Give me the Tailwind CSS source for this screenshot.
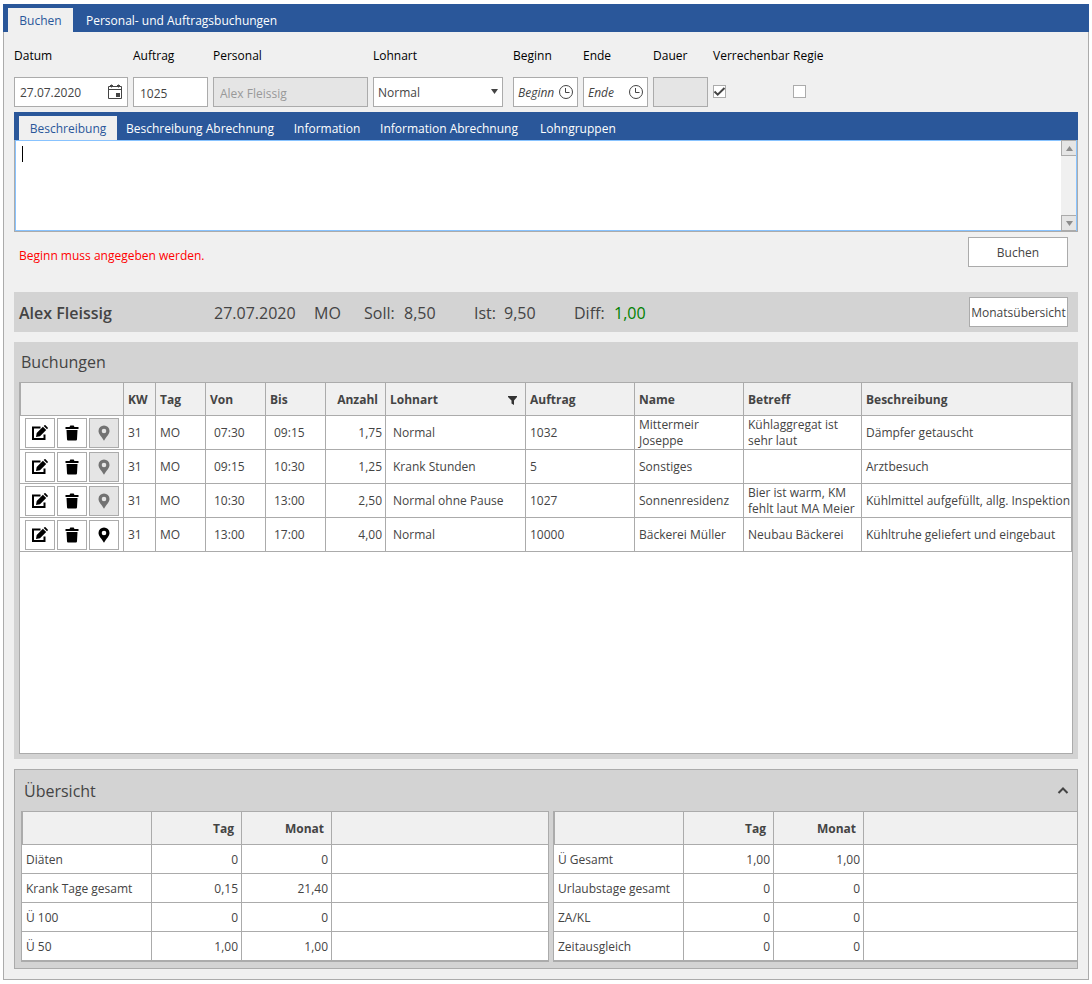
<!DOCTYPE html>
<html lang="de">
<head>
    <meta charset="UTF-8" />
    <meta name="viewport" content="width=device-width, initial-scale=1.0" />
    <title>Buchen</title>
    <!-- Tailwind CSS CDN -->
    <script src="https://cdn.jsdelivr.net/npm/@tailwindcss/browser@4"></script>
</head>
<body class="min-h-screen flex flex-col bg-white px-[3px] py-1 font-['Open_Sans',sans-serif] text-xs text-[#444444]">

    <!-- Icons used more than once -->
    <svg class="hidden">
        <symbol id="icon-edit" viewBox="0 0 16 16">
            <path d="M8.500 2.500H1v11.500h11.500V9.500" fill="none" stroke="currentColor" stroke-width="2" />
            <path d="M4 12l.7-4 6.200-6.200 3.300 3.300L8 11.300zM11.700 1l.8-.7c.3-.3.7-.3 1 0l2.200 2.200c.3.3.3.7 0 1l-.7.8z" fill="currentColor" />
        </symbol>
        <symbol id="icon-trash" viewBox="0 0 16 16">
            <path d="M1.500 2h4l.8-1.500h3.400L10.500 2h4v2h-13zM2.500 5h11l-.5 9.200c0 .8-.6 1.300-1.300 1.300h-7.400c-.7 0-1.300-.5-1.300-1.300z" fill="currentColor" />
        </symbol>
        <symbol id="icon-pin" viewBox="0 0 16 16">
            <path fill-rule="evenodd" d="M8 0.500a5.500 5.500 0 0 0-5.500 5.500c0 3 3 5.500 5.500 9.700c2.500-4.200 5.500-6.700 5.500-9.700a5.500 5.500 0 0 0-5.500-5.500zM8 3.700a2.300 2.300 0 1 1 0 4.600a2.300 2.300 0 0 1 0-4.600z" fill="currentColor" />
        </symbol>
        <symbol id="icon-clock" viewBox="0 0 14 14">
            <circle cx="7" cy="7" r="6.500" fill="none" stroke="currentColor" />
            <path d="M6.500 3v4.500H10.500" fill="none" stroke="currentColor" />
        </symbol>
    </svg>

    <!-- Main tabs -->
    <nav class="flex h-7 items-end bg-[#2a579a] pl-[5px] text-white">
        <button class="h-6 w-[65px] bg-[#f0f0f0] pt-0.5 text-[#2a579a]">Buchen</button>
        <button class="h-6 px-[13px] pt-0.5">Personal- und Auftragsbuchungen</button>
    </nav>

    <main class="flex flex-1 flex-col border border-t-0 border-[#ababab] bg-[#f0f0f0] px-2.5 pt-4 pb-2.5">

        <!-- Booking form -->
        <form class="flex gap-[5px]">
            <div class="flex w-[114px] flex-col gap-[13px]">
                <label for="datum" class="leading-4 text-black">Datum</label>
                <div class="flex h-[30px] items-center border border-[#ababab] bg-white pr-1 pl-[5px]">
                    <input id="datum" type="text" value="27.07.2020" class="w-full min-w-0 flex-1 pt-0.5 outline-none" />
                    <svg class="h-4 w-4 shrink-0" viewBox="0 0 16 16" fill="none" stroke="#444444">
                        <path d="M1.500 2.500h13v12h-13zM1.500 5.500h13M4.500 0.500v3M11.500 0.500v3M3 1.500h3M10 1.500h3" />
                        <path d="M9 9h4v4H9z" fill="#444444" stroke="none" />
                    </svg>
                </div>
            </div>
            <div class="flex w-[75px] flex-col gap-[13px]">
                <label for="auftrag" class="leading-4 text-black">Auftrag</label>
                <input id="auftrag" type="text" value="1025" class="h-[30px] border border-[#ababab] bg-white px-1.5 pt-0.5 outline-none" />
            </div>
            <div class="flex w-[155px] flex-col gap-[13px]">
                <label for="personal" class="leading-4 text-black">Personal</label>
                <input id="personal" type="text" value="Alex Fleissig" disabled class="h-[30px] border border-[#ababab] bg-[#e5e5e5] px-1.5 pt-0.5 text-[#999999]" />
            </div>
            <div class="flex w-[130px] flex-col gap-[13px]">
                <label for="lohnart" class="leading-4 text-black">Lohnart</label>
                <div class="relative">
                    <select id="lohnart" class="h-[30px] w-full appearance-none border border-[#ababab] bg-white px-1 pt-0.5 outline-none">
                        <option>Normal</option>
                        <option>Krank Stunden</option>
                        <option>Normal ohne Pause</option>
                    </select>
                    <svg class="pointer-events-none absolute top-3 right-[5px] h-[5px] w-[7px]" viewBox="0 0 7 5"><path d="M0 0h7L3.500 5z" fill="#444444" /></svg>
                </div>
            </div>
            <div class="ml-[5px] flex w-[65px] flex-col gap-[13px]">
                <label for="beginn" class="leading-4 text-black">Beginn</label>
                <div class="flex h-[30px] items-center border border-[#ababab] bg-white px-1">
                    <input id="beginn" type="text" placeholder="Beginn" class="w-full min-w-0 flex-1 pt-0.5 outline-none placeholder:text-[#444444] placeholder:italic" />
                    <svg class="h-3.5 w-3.5 shrink-0"><use href="#icon-clock" /></svg>
                </div>
            </div>
            <div class="flex w-[65px] flex-col gap-[13px]">
                <label for="ende" class="leading-4 text-black">Ende</label>
                <div class="flex h-[30px] items-center border border-[#ababab] bg-white px-1">
                    <input id="ende" type="text" placeholder="Ende" class="w-full min-w-0 flex-1 pt-0.5 outline-none placeholder:text-[#444444] placeholder:italic" />
                    <svg class="h-3.5 w-3.5 shrink-0"><use href="#icon-clock" /></svg>
                </div>
            </div>
            <div class="flex w-[55px] flex-col gap-[13px]">
                <label for="dauer" class="leading-4 text-black">Dauer</label>
                <input id="dauer" type="text" disabled class="h-[30px] border border-[#ababab] bg-[#e5e5e5] px-1.5" />
            </div>
            <div class="flex w-[75px] flex-col gap-[21px]">
                <label for="verrechenbar" class="leading-4 text-black">Verrechenbar</label>
                <div class="relative h-[13px] w-[13px]">
                    <input id="verrechenbar" type="checkbox" checked class="peer block h-[13px] w-[13px] appearance-none border border-[#ababab] bg-white" />
                    <svg class="pointer-events-none absolute inset-0 hidden h-[13px] w-[13px] peer-checked:block" viewBox="0 0 13 13"><path d="M1.500 6.500l3.200 3.200L11.500 3" fill="none" stroke="#444444" stroke-width="2" /></svg>
                </div>
            </div>
            <div class="flex flex-col gap-[21px]">
                <label for="regie" class="leading-4 text-black">Regie</label>
                <input id="regie" type="checkbox" class="block h-[13px] w-[13px] appearance-none border border-[#ababab] bg-white" />
            </div>
        </form>

        <!-- Description tabs -->
        <nav class="mt-[5px] flex h-7 items-end bg-[#2a579a] pl-[5px] text-white">
            <button class="h-6 w-[98px] bg-[#f0f0f0] pt-0.5 text-[#2a579a]">Beschreibung</button>
            <button class="h-6 w-[166px] pt-0.5">Beschreibung Abrechnung</button>
            <button class="h-6 w-[88px] pt-0.5">Information</button>
            <button class="h-6 w-[156px] pt-0.5">Information Abrechnung</button>
            <button class="h-6 px-[13px] pt-0.5">Lohngruppen</button>
        </nav>
        <div class="border border-t-0 border-[#ababab]">
            <div class="relative flex h-[91px] border border-[#88c3ff] bg-white">
                <textarea aria-label="Beschreibung" class="flex-1 resize-none px-1.5 py-1 outline-none"></textarea>
                <div class="absolute top-[5px] left-1.5 h-4 w-px bg-black"></div>
                <div class="-my-px flex w-[15px] flex-col justify-between bg-[#f0f0f0]">
                    <button aria-label="Nach oben" class="flex h-4 items-center justify-center border border-r-0 border-[#ababab] bg-[#e5e5e5]">
                        <svg class="h-[5px] w-[7px]" viewBox="0 0 7 5"><path d="M0 5h7L3.500 0z" fill="#8c8c8c" /></svg>
                    </button>
                    <button aria-label="Nach unten" class="flex h-4 items-center justify-center border border-r-0 border-[#ababab] bg-[#e5e5e5]">
                        <svg class="h-[5px] w-[7px]" viewBox="0 0 7 5"><path d="M0 0h7L3.500 5z" fill="#8c8c8c" /></svg>
                    </button>
                </div>
            </div>
        </div>

        <div class="mt-[5px] flex items-center justify-between pr-2.5 pl-[5px]">
            <p class="pt-2 text-[#ff0000]">Beginn muss angegeben werden.</p>
            <button class="h-[30px] w-[100px] border border-[#ababab] bg-white pt-0.5">Buchen</button>
        </div>

        <!-- Day summary -->
        <section class="mt-[25px] flex h-10 items-center bg-[#d3d3d3] pr-2.5 pl-[5px] text-base">
            <h2 class="w-[195px] pt-0.5 font-semibold">Alex Fleissig</h2>
            <span class="w-[100px] pt-0.5">27.07.2020</span>
            <span class="w-[50px] pt-0.5">MO</span>
            <span class="w-10 pt-0.5">Soll:</span>
            <span class="w-[70px] pt-0.5">8,50</span>
            <span class="w-[30px] pt-0.5">Ist:</span>
            <span class="w-[70px] pt-0.5">9,50</span>
            <span class="w-10 pt-0.5">Diff:</span>
            <span class="pt-0.5 text-[#008000]">1,00</span>
            <button class="ml-auto h-[30px] w-[99px] border border-[#ababab] bg-white pt-0.5 text-xs">Monatsübersicht</button>
        </section>

        <!-- Bookings -->
        <section class="mt-2.5 flex flex-1 flex-col bg-[#d3d3d3] px-[5px] pb-[5px]">
            <h2 class="flex h-10 items-center pl-0.5 text-base">Buchungen</h2>
            <div class="flex-1 border border-[#ababab] bg-white">
                <table class="w-full table-fixed border-separate border-spacing-0 text-left leading-4 [&_td]:h-[34px] [&_td]:border-r [&_td]:border-b [&_td]:border-[#ababab] [&_td]:p-0 [&_td]:pt-px [&_td]:pl-1 [&_th]:h-[33px] [&_th]:border-r [&_th]:border-b [&_th]:border-[#ababab] [&_th]:bg-[#f0f0f0] [&_th]:p-0 [&_th]:pt-0.5 [&_th]:pl-1">
                    <colgroup>
                        <col class="w-[104px]" />
                        <col class="w-8" />
                        <col class="w-[50px]" />
                        <col class="w-[60px]" />
                        <col class="w-[60px]" />
                        <col class="w-[60px]" />
                        <col class="w-[140px]" />
                        <col class="w-[109px]" />
                        <col class="w-[109px]" />
                        <col class="w-[118px]" />
                        <col />
                    </colgroup>
                    <thead>
                        <tr>
                            <th class="border-l"></th>
                            <th>KW</th>
                            <th>Tag</th>
                            <th>Von</th>
                            <th>Bis</th>
                            <th><div class="pr-[7px] text-right">Anzahl</div></th>
                            <th>
                                <div class="flex items-center justify-between pr-2">
                                    Lohnart
                                    <button aria-label="Lohnart filtern"><svg class="h-[9px] w-[9px]" viewBox="0 0 9 9"><path d="M0 0h9v1L6 4.500V9L3.500 7.500v-3L0 1z" fill="#333333" /></svg></button>
                                </div>
                            </th>
                            <th>Auftrag</th>
                            <th>Name</th>
                            <th>Betreff</th>
                            <th>Beschreibung</th>
                        </tr>
                    </thead>
                    <tbody>
                        <tr>
                            <td>
                                <div class="flex gap-0.5 pl-px text-black">
                                    <button aria-label="Bearbeiten" class="flex h-[30px] w-[30px] items-center justify-center border border-[#ababab] bg-white"><svg class="h-4 w-4"><use href="#icon-edit" /></svg></button>
                                    <button aria-label="Löschen" class="flex h-[30px] w-[30px] items-center justify-center border border-[#ababab] bg-white"><svg class="h-4 w-4"><use href="#icon-trash" /></svg></button>
                                    <button aria-label="Standort" disabled class="flex h-[30px] w-[30px] items-center justify-center border border-[#ababab] bg-[#e5e5e5] text-[#727272]"><svg class="h-4 w-4"><use href="#icon-pin" /></svg></button>
                                </div>
                            </td>
                            <td>31</td>
                            <td>MO</td>
                            <td><div class="pl-1">07:30</div></td>
                            <td><div class="pl-1">09:15</div></td>
                            <td><div class="pr-[3px] text-right">1,75</div></td>
                            <td><div class="pl-[3px]">Normal</div></td>
                            <td>1032</td>
                            <td>Mittermeir<br />Joseppe</td>
                            <td>Kühlaggregat ist<br />sehr laut</td>
                            <td>Dämpfer getauscht</td>
                        </tr>
                        <tr>
                            <td>
                                <div class="flex gap-0.5 pl-px text-black">
                                    <button aria-label="Bearbeiten" class="flex h-[30px] w-[30px] items-center justify-center border border-[#ababab] bg-white"><svg class="h-4 w-4"><use href="#icon-edit" /></svg></button>
                                    <button aria-label="Löschen" class="flex h-[30px] w-[30px] items-center justify-center border border-[#ababab] bg-white"><svg class="h-4 w-4"><use href="#icon-trash" /></svg></button>
                                    <button aria-label="Standort" disabled class="flex h-[30px] w-[30px] items-center justify-center border border-[#ababab] bg-[#e5e5e5] text-[#727272]"><svg class="h-4 w-4"><use href="#icon-pin" /></svg></button>
                                </div>
                            </td>
                            <td>31</td>
                            <td>MO</td>
                            <td><div class="pl-1">09:15</div></td>
                            <td><div class="pl-1">10:30</div></td>
                            <td><div class="pr-[3px] text-right">1,25</div></td>
                            <td><div class="pl-[3px]">Krank Stunden</div></td>
                            <td>5</td>
                            <td>Sonstiges</td>
                            <td></td>
                            <td>Arztbesuch</td>
                        </tr>
                        <tr>
                            <td>
                                <div class="flex gap-0.5 pl-px text-black">
                                    <button aria-label="Bearbeiten" class="flex h-[30px] w-[30px] items-center justify-center border border-[#ababab] bg-white"><svg class="h-4 w-4"><use href="#icon-edit" /></svg></button>
                                    <button aria-label="Löschen" class="flex h-[30px] w-[30px] items-center justify-center border border-[#ababab] bg-white"><svg class="h-4 w-4"><use href="#icon-trash" /></svg></button>
                                    <button aria-label="Standort" disabled class="flex h-[30px] w-[30px] items-center justify-center border border-[#ababab] bg-[#e5e5e5] text-[#727272]"><svg class="h-4 w-4"><use href="#icon-pin" /></svg></button>
                                </div>
                            </td>
                            <td>31</td>
                            <td>MO</td>
                            <td><div class="pl-1">10:30</div></td>
                            <td><div class="pl-1">13:00</div></td>
                            <td><div class="pr-[3px] text-right">2,50</div></td>
                            <td><div class="pl-[3px]">Normal ohne Pause</div></td>
                            <td>1027</td>
                            <td>Sonnenresidenz</td>
                            <td class="whitespace-nowrap">Bier ist warm, KM<br />fehlt laut MA Meier</td>
                            <td class="whitespace-nowrap">Kühlmittel aufgefüllt, allg. Inspektion</td>
                        </tr>
                        <tr>
                            <td>
                                <div class="flex gap-0.5 pl-px text-black">
                                    <button aria-label="Bearbeiten" class="flex h-[30px] w-[30px] items-center justify-center border border-[#ababab] bg-white"><svg class="h-4 w-4"><use href="#icon-edit" /></svg></button>
                                    <button aria-label="Löschen" class="flex h-[30px] w-[30px] items-center justify-center border border-[#ababab] bg-white"><svg class="h-4 w-4"><use href="#icon-trash" /></svg></button>
                                    <button aria-label="Standort" class="flex h-[30px] w-[30px] items-center justify-center border border-[#ababab] bg-white"><svg class="h-4 w-4"><use href="#icon-pin" /></svg></button>
                                </div>
                            </td>
                            <td>31</td>
                            <td>MO</td>
                            <td><div class="pl-1">13:00</div></td>
                            <td><div class="pl-1">17:00</div></td>
                            <td><div class="pr-[3px] text-right">4,00</div></td>
                            <td><div class="pl-[3px]">Normal</div></td>
                            <td>10000</td>
                            <td>Bäckerei Müller</td>
                            <td>Neubau Bäckerei</td>
                            <td class="whitespace-nowrap">Kühltruhe geliefert und eingebaut</td>
                        </tr>
                    </tbody>
                </table>
            </div>
        </section>

        <!-- Overview -->
        <section class="mt-2.5 border border-[#ababab] bg-[#d3d3d3] pb-1.5 pl-1.5">
            <div class="flex h-[41px] items-center justify-between pr-2 pl-[3px]">
                <h2 class="text-base">Übersicht</h2>
                <button aria-label="Übersicht einklappen"><svg class="h-[11px] w-3" viewBox="0 0 12 11"><path d="M1.500 8l4.500-4.500L10.500 8" fill="none" stroke="#444444" stroke-width="2" /></svg></button>
            </div>
            <div class="grid grid-cols-[528fr_524fr] gap-1">
                <div class="border border-[#ababab] bg-white">
                    <table class="w-full table-fixed border-separate border-spacing-0 leading-4 [&_td]:h-[29px] [&_td]:border-b [&_td]:border-[#ababab] [&_td]:pt-0.5 [&_td]:pr-[3px] [&_td]:pb-0 [&_td]:pl-1 [&_td:not(:last-child)]:border-r [&_td:not(:first-child)]:text-right [&_th]:h-[33px] [&_th]:border-b [&_th]:border-[#ababab] [&_th]:bg-[#f0f0f0] [&_th]:pt-0.5 [&_th]:pr-[7px] [&_th]:pb-0 [&_th]:text-right [&_th:first-child]:border-l [&_th:not(:last-child)]:border-r">
                        <colgroup>
                            <col class="w-[130px]" />
                            <col class="w-[90px]" />
                            <col class="w-[90px]" />
                            <col />
                        </colgroup>
                        <thead>
                            <tr><th></th><th>Tag</th><th>Monat</th><th></th></tr>
                        </thead>
                        <tbody>
                            <tr><td>Diäten</td><td>0</td><td>0</td><td></td></tr>
                            <tr><td>Krank Tage gesamt</td><td>0,15</td><td>21,40</td><td></td></tr>
                            <tr><td>Ü 100</td><td>0</td><td>0</td><td></td></tr>
                            <tr><td>Ü 50</td><td>1,00</td><td>1,00</td><td></td></tr>
                        </tbody>
                    </table>
                </div>
                <div class="border border-r-0 border-[#ababab] bg-white">
                    <table class="w-full table-fixed border-separate border-spacing-0 leading-4 [&_td]:h-[29px] [&_td]:border-b [&_td]:border-[#ababab] [&_td]:pt-0.5 [&_td]:pr-[3px] [&_td]:pb-0 [&_td]:pl-1 [&_td:not(:last-child)]:border-r [&_td:not(:first-child)]:text-right [&_th]:h-[33px] [&_th]:border-b [&_th]:border-[#ababab] [&_th]:bg-[#f0f0f0] [&_th]:pt-0.5 [&_th]:pr-[7px] [&_th]:pb-0 [&_th]:text-right [&_th:first-child]:border-l [&_th:not(:last-child)]:border-r">
                        <colgroup>
                            <col class="w-[130px]" />
                            <col class="w-[90px]" />
                            <col class="w-[90px]" />
                            <col />
                        </colgroup>
                        <thead>
                            <tr><th></th><th>Tag</th><th>Monat</th><th></th></tr>
                        </thead>
                        <tbody>
                            <tr><td>Ü Gesamt</td><td>1,00</td><td>1,00</td><td></td></tr>
                            <tr><td>Urlaubstage gesamt</td><td>0</td><td>0</td><td></td></tr>
                            <tr><td>ZA/KL</td><td>0</td><td>0</td><td></td></tr>
                            <tr><td>Zeitausgleich</td><td>0</td><td>0</td><td></td></tr>
                        </tbody>
                    </table>
                </div>
            </div>
        </section>
    </main>
</body>
</html>
